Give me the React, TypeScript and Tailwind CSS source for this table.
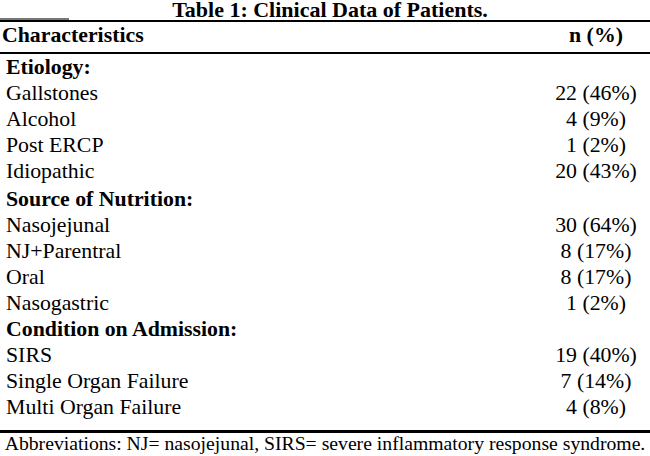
import React from "react";

type Row = { label: string; value?: string; section?: boolean; pad?: string };

const rows: Row[] = [
  { label: "Etiology:", section: true, pad: "pt-0" },
  { label: "Gallstones", value: "22 (46%)" },
  { label: "Alcohol", value: "4 (9%)" },
  { label: "Post ERCP", value: "1 (2%)" },
  { label: "Idiopathic", value: "20 (43%)" },
  { label: "Source of Nutrition:", section: true, pad: "pt-[2px]" },
  { label: "Nasojejunal", value: "30 (64%)" },
  { label: "NJ+Parentral", value: "8 (17%)" },
  { label: "Oral", value: "8 (17%)" },
  { label: "Nasogastric", value: "1 (2%)" },
  { label: "Condition on Admission:", section: true, pad: "pt-0" },
  { label: "SIRS", value: "19 (40%)" },
  { label: "Single Organ Failure", value: "7 (14%)" },
  { label: "Multi Organ Failure", value: "4 (8%)" },
];

export default function App() {
  return (
    <div className="w-[650px] h-[456px] bg-white text-black overflow-hidden font-['Liberation_Serif','Times_New_Roman','DejaVu_Serif',serif]">
      {/* Title */}
      <div className="relative h-[20px] flex justify-center pl-[10px]">
        <div className="text-[22px] leading-[20px] font-bold whitespace-nowrap">
          Table 1: Clinical Data of Patients.
        </div>
        <div className="absolute left-0 top-[18px] h-[2px] w-[69px] bg-[#777]" />
      </div>
      <div className="h-[2px] bg-black" />

      {/* Header */}
      <div className="flex h-[30px] text-[21.8px] leading-[26px] font-bold">
        <div className="flex-1 pl-[2px]">Characteristics</div>
        <div className="w-[108px] text-center">n (%)</div>
      </div>
      <div className="h-[2px] bg-black" />

      {/* Body */}
      <div className="flex flex-col pb-[10px]">
        {rows.map((r) => (
          <div
            key={r.label}
            className={`flex text-[21.8px] leading-[26px] ${r.section ? "font-bold" : ""} ${r.pad ?? ""}`}
          >
            <div className="flex-1 pl-[6px] whitespace-nowrap">{r.label}</div>
            <div className="w-[108px] text-center whitespace-nowrap">{r.value ?? ""}</div>
          </div>
        ))}
      </div>
      <div className="h-[3px] bg-black" />

      {/* Footer */}
      <div className="text-[19.7px] leading-[20px] text-center whitespace-nowrap">
        Abbreviations: NJ= nasojejunal, SIRS= severe inflammatory response syndrome.
      </div>
    </div>
  );
}
